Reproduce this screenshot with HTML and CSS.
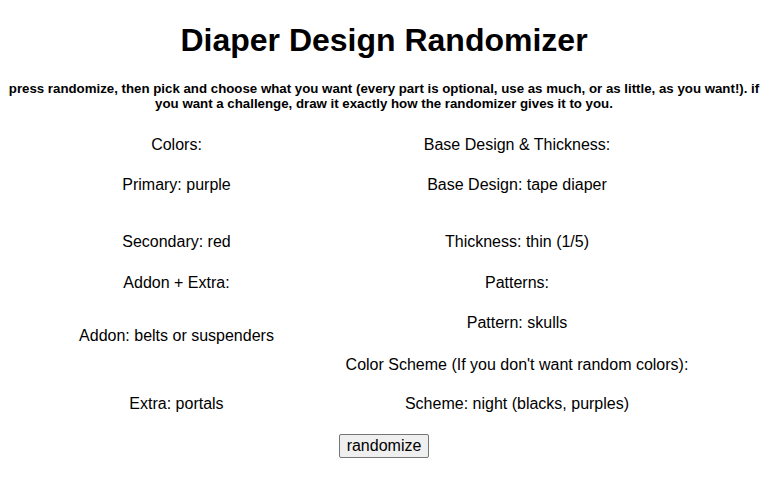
FILE: index.html
```html
<!DOCTYPE html>
<html>
<head>
<meta charset="utf-8">
<link rel="stylesheet" href="styles.css">
</head>
<body>
<h1 class="title">Diaper Design Randomizer</h1>
<h5 class="intro">press randomize, then pick and choose what you want (every part is optional, use as much, or as little, as you want!). if you want a challenge, draw it exactly how the randomizer gives it to you.</h5>
<div class="grid">
  <div class="cell r1">Colors:</div>
  <div class="cell r1">Base Design &amp; Thickness:</div>
  <div class="cell r2">Primary: purple</div>
  <div class="cell r2">Base Design: tape diaper</div>
  <div class="cell r3">Secondary: red</div>
  <div class="cell r3">Thickness: thin (1/5)</div>
  <div class="cell r4">Addon + Extra:</div>
  <div class="cell r4">Patterns:</div>
  <div class="cell r5 addon">Addon: belts or suspenders</div>
  <div class="cell r5 stack">
    <div class="line">Pattern: skulls</div>
    <div class="line">Color Scheme (If you don't want random colors):</div>
  </div>
  <div class="cell r6">Extra: portals</div>
  <div class="cell r6">Scheme: night (blacks, purples)</div>
</div>
<div class="actions">
  <button class="btn" type="button">randomize</button>
</div>
</body>
</html>
```

FILE: styles.css
```css
html, body {
  background: #ffffff;
}
body {
  margin: 8px;
  font-family: "Liberation Sans", Arial, sans-serif;
  color: #000;
}
.title {
  font-size: 32px;
  font-weight: bold;
  text-align: center;
  margin: 14px 0 0;
  line-height: 37px;
}
.intro {
  font-size: 13.28px;
  font-weight: bold;
  text-align: center;
  margin: 22px 0 0;
  line-height: 15px;
}
.grid {
  display: grid;
  grid-template-columns: 333px 344px;
  column-gap: 2px;
  margin: 25px 0 0 2px;
  font-size: 16px;
  line-height: 18px;
  text-align: center;
}
.cell {
  white-space: nowrap;
}
.r1 { height: 40px; }
.r2 { height: 57px; }
.r3 { height: 41px; }
.r4 { height: 40px; }
.r5 { height: 81px; }
.r6 { height: 18px; }
.addon {
  padding-top: 13px;
  box-sizing: border-box;
}
.stack .line + .line {
  margin-top: 24px;
}
.actions {
  display: flex;
  justify-content: center;
  margin-top: 21px;
}
.btn {
  font-family: "Liberation Sans", Arial, sans-serif;
  font-size: 16px;
  line-height: 18px;
  padding: 2px 7px;
  background: #efefef;
  border: 1px solid #767676;
  border-radius: 2px;
  color: #000;
}
```
